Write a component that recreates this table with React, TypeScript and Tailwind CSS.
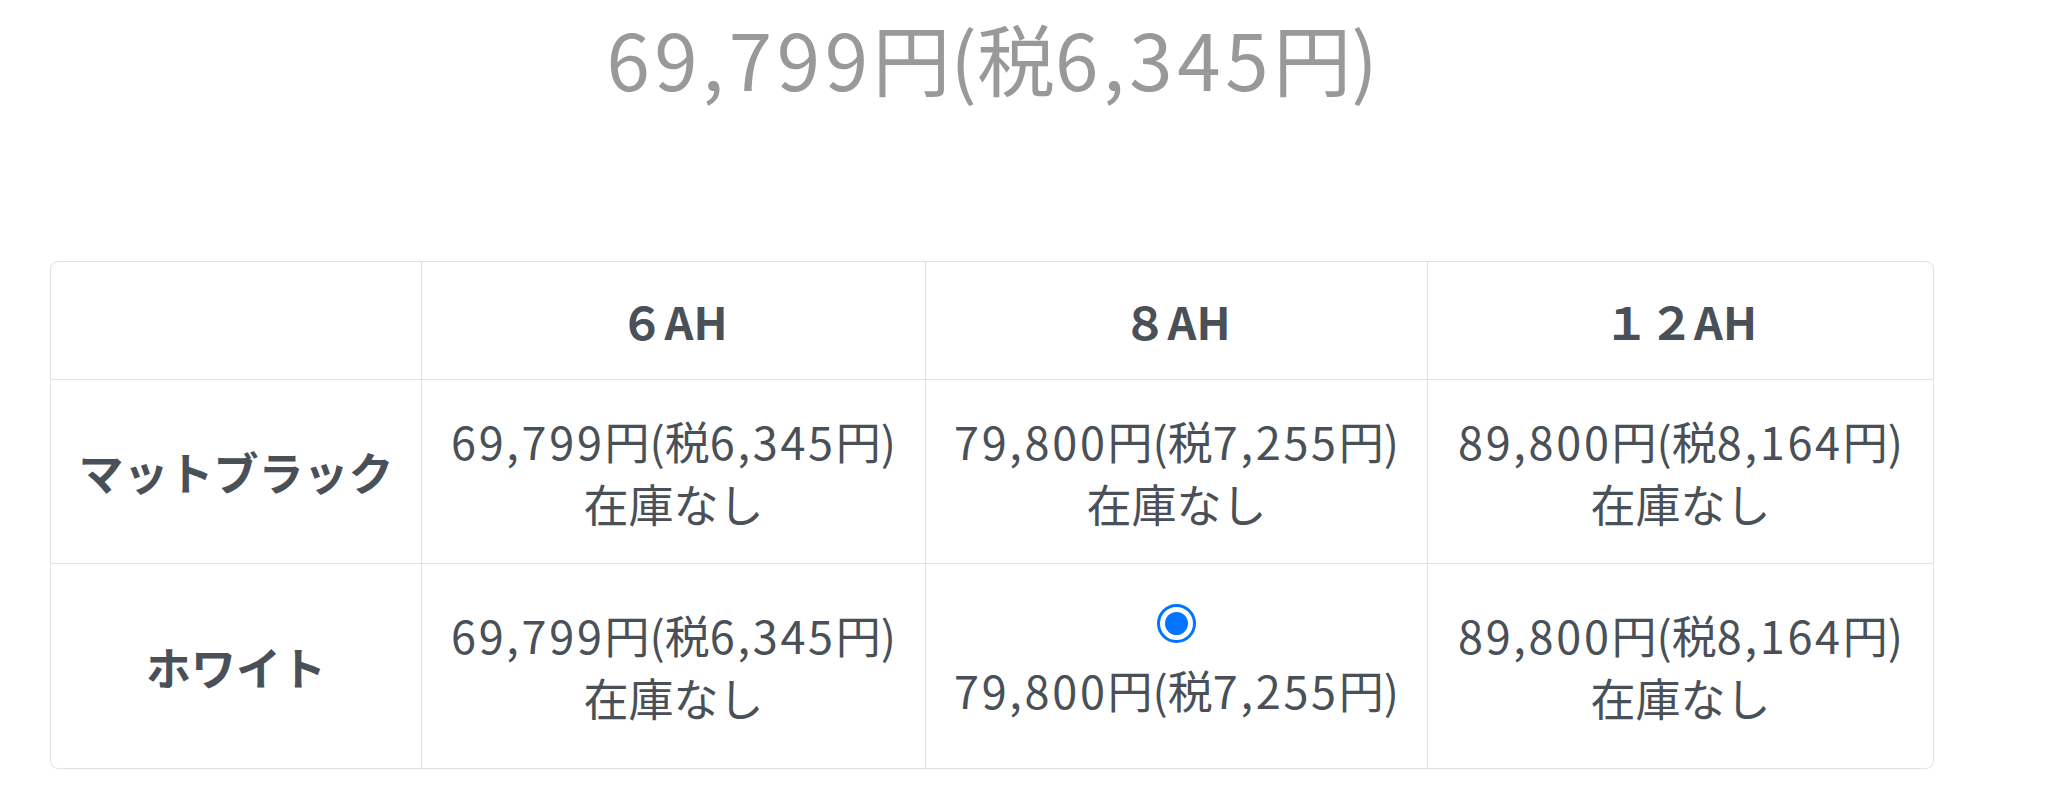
const font = { fontFamily: '"Noto Sans CJK JP", "Noto Sans", sans-serif' };

type Cell = { price: string; selected?: boolean };

const columns = ["６AH", "８AH", "１２AH"];

const rows: { name: string; height: string; cells: Cell[] }[] = [
  {
    name: "マットブラック",
    height: "h-[184px]",
    cells: [
      { price: "69,799円(税6,345円)" },
      { price: "79,800円(税7,255円)" },
      { price: "89,800円(税8,164円)" },
    ],
  },
  {
    name: "ホワイト",
    height: "h-[204px]",
    cells: [
      { price: "69,799円(税6,345円)" },
      { price: "79,800円(税7,255円)", selected: true },
      { price: "89,800円(税8,164円)" },
    ],
  },
];

// digits in the price are set a bit wider than the kanji around them
const Price = ({ text }: { text: string }) => (
  <>
    {text.split(/([0-9,]+)/).map((part, i) =>
      /[0-9]/.test(part) ? (
        <span key={i} className="tracking-[0.06em]">
          {part}
        </span>
      ) : (
        <span key={i}>{part}</span>
      )
    )}
  </>
);

const Radio = () => (
  <span className="flex h-[39px] w-[39px] items-center justify-center rounded-full border-[3px] border-[#0075ff] bg-white">
    <span className="h-[23px] w-[23px] rounded-full bg-[#0075ff]" />
  </span>
);

export default function App() {
  return (
    <div className="min-h-screen bg-white pt-[10px]" style={font}>
      <div className="ml-[50px] w-[1884px]">
        <h3 className="text-center text-[78px] leading-[94px] font-normal text-[#999999]">
          <Price text="69,799円(税6,345円)" />
        </h3>

        <div className="mt-[157px] overflow-hidden rounded-[8px] border border-[#dee2e6] text-[#495057]">
          {/* header */}
          <div className="grid h-[118px] grid-cols-[371px_504px_502px_1fr] border-b border-[#dee2e6]">
            <div className="border-r border-[#dee2e6]" />
            {columns.map((c, i) => (
              <div
                key={c}
                className={`flex items-center justify-center text-[45px] font-bold leading-[63px] ${
                  i < columns.length - 1 ? "border-r border-[#dee2e6]" : ""
                }`}
              >
                {c}
              </div>
            ))}
          </div>

          {rows.map((row, r) => (
            <div
              key={row.name}
              className={`grid grid-cols-[371px_504px_502px_1fr] ${row.height} ${
                r < rows.length - 1 ? "border-b border-[#dee2e6]" : ""
              }`}
            >
              <div className="flex items-center justify-center border-r border-[#dee2e6] text-[45px] font-bold leading-[63px]">
                {row.name}
              </div>
              {row.cells.map((cell, i) => (
                <div
                  key={i}
                  className={`flex flex-col items-center justify-center text-[45px] leading-[63px] ${
                    i < row.cells.length - 1 ? "border-r border-[#dee2e6]" : ""
                  }`}
                >
                  {cell.selected ? (
                    <>
                      <div className="mb-[15px] mt-[-8px]">
                        <Radio />
                      </div>
                      <div>
                        <Price text={cell.price} />
                      </div>
                    </>
                  ) : (
                    <>
                      <div>
                        <Price text={cell.price} />
                      </div>
                      <div>在庫なし</div>
                    </>
                  )}
                </div>
              ))}
            </div>
          ))}
        </div>
      </div>
    </div>
  );
}
